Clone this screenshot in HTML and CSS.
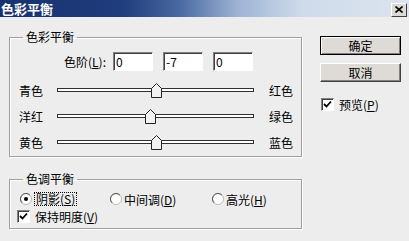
FILE: index.html
```html
<html>
<head>
    <title>色彩平衡</title>
    <link rel="stylesheet" href="styles.css">
</head>
<body>

<div id="dialog">

    <div id="titlebar">
        <span id="title">色彩平衡</span>
        <span id="close">
            <svg width="8" height="7" viewBox="0 0 8 7"><path d="M0.5 0.5L7.5 6.5M7.5 0.5L0.5 6.5" stroke="#000" stroke-width="1.6"/></svg>
        </span>
    </div>

    <div id="main">
        <div id="groups">

            <fieldset class="group" id="balance">
                <legend class="grouptitle">色彩平衡</legend>
                <div class="levels">
                    <span class="levelslabel">色阶(<u>L</u>):</span>
                    <span class="field">0</span>
                    <span class="field">-7</span>
                    <span class="field">0</span>
                </div>
                <div class="sliders">
                    <div class="sliderrow">
                        <span class="leftlabel">青色</span>
                        <div class="track">
                            <svg class="thumb" style="left: 50%" width="11" height="15" viewBox="0 0 11 15"><polygon points="0.5,5.5 5.5,0.5 10.5,5.5 10.5,14.5 0.5,14.5" fill="#f2f2f2" stroke="#222"/></svg>
                        </div>
                        <span class="rightlabel">红色</span>
                    </div>
                    <div class="sliderrow">
                        <span class="leftlabel">洋红</span>
                        <div class="track">
                            <svg class="thumb" style="left: 47%" width="11" height="15" viewBox="0 0 11 15"><polygon points="0.5,5.5 5.5,0.5 10.5,5.5 10.5,14.5 0.5,14.5" fill="#f2f2f2" stroke="#222"/></svg>
                        </div>
                        <span class="rightlabel">绿色</span>
                    </div>
                    <div class="sliderrow">
                        <span class="leftlabel">黄色</span>
                        <div class="track">
                            <svg class="thumb" style="left: 50%" width="11" height="15" viewBox="0 0 11 15"><polygon points="0.5,5.5 5.5,0.5 10.5,5.5 10.5,14.5 0.5,14.5" fill="#f2f2f2" stroke="#222"/></svg>
                        </div>
                        <span class="rightlabel">蓝色</span>
                    </div>
                </div>
            </fieldset>

            <fieldset class="group" id="tone">
                <legend class="grouptitle">色调平衡</legend>
                <div class="radios">
                    <span class="radio shadows">
                        <svg width="12" height="12" viewBox="0 0 12 12"><circle cx="6" cy="6" r="5.5" fill="#fff" stroke="#b8b8b8"/><path d="M2.1 9.9A5.5 5.5 0 0 1 9.9 2.1" fill="none" stroke="#555"/><circle cx="6" cy="6" r="2" fill="#000"/></svg>
                        <span class="focus">阴影(<u>S</u>)</span>
                    </span>
                    <span class="radio midtones">
                        <svg width="12" height="12" viewBox="0 0 12 12"><circle cx="6" cy="6" r="5.5" fill="#fff" stroke="#b8b8b8"/><path d="M2.1 9.9A5.5 5.5 0 0 1 9.9 2.1" fill="none" stroke="#555"/></svg>
                        <span>中间调(<u>D</u>)</span>
                    </span>
                    <span class="radio">
                        <svg width="12" height="12" viewBox="0 0 12 12"><circle cx="6" cy="6" r="5.5" fill="#fff" stroke="#b8b8b8"/><path d="M2.1 9.9A5.5 5.5 0 0 1 9.9 2.1" fill="none" stroke="#555"/></svg>
                        <span>高光(<u>H</u>)</span>
                    </span>
                </div>
                <div class="check keep">
                    <span class="box"><svg width="9" height="9" viewBox="0 0 9 9"><polyline points="1,4 3.5,6.5 8,1.5" fill="none" stroke="#000" stroke-width="1.8"/></svg></span>
                    <span>保持明度(<u>V</u>)</span>
                </div>
            </fieldset>

        </div>

        <div id="buttons">
            <span class="button default">确定</span>
            <span class="button">取消</span>
            <div class="check preview">
                <span class="box"><svg width="9" height="9" viewBox="0 0 9 9"><polyline points="1,4 3.5,6.5 8,1.5" fill="none" stroke="#000" stroke-width="1.8"/></svg></span>
                <span>预览(<u>P</u>)</span>
            </div>
        </div>
    </div>

</div>

</body>
</html>
```

FILE: styles.css
```css
body {
    margin: 0;
    background: #ededed;
    font-family: "Noto Sans CJK SC", "DejaVu Sans", sans-serif;
    font-size: 12px;
    color: #000000;
}

#dialog {
    width: 409px;
    height: 241px;
    overflow: hidden;
    background: #ededed;
}

#titlebar {
    height: 17px;
    display: flex;
    align-items: center;
    justify-content: space-between;
    background: linear-gradient(90deg, #17326f 0%, #1f3c7c 30%, #4a6aa2 44%, #9db3d3 58%, #cfdbea 74%, #dbe4ef 100%);
}

#title {
    color: #ffffff;
    font-weight: bold;
    font-size: 13px;
    line-height: 17px;
    padding-left: 1px;
}

#close {
    width: 14px;
    height: 12px;
    margin-right: 2px;
    margin-top: 2px;
    display: flex;
    align-items: center;
    justify-content: center;
    background: #dcdad5;
    border: 1px solid;
    border-color: #ffffff #404040 #404040 #ffffff;
}

#main {
    display: flex;
    padding-top: 13px;
}

#groups {
    margin-left: 9px;
    width: 293px;
}

.group {
    margin: 0;
    padding: 0;
    border: 1px solid #a0a0a0;
    box-shadow: 1px 1px 0 #ffffff, inset 1px 1px 0 #ffffff;
}

.grouptitle {
    margin-left: 13px;
    padding: 0 3px;
    line-height: 14px;
    height: 14px;
}

#balance {
    padding-bottom: 1px;
}

#tone {
    margin-top: 15px;
    padding-bottom: 5px;
}

.levels {
    display: flex;
    align-items: center;
    margin-top: 7px;
    height: 21px;
}

.levelslabel {
    width: 96px;
    text-align: right;
    margin-right: 7px;
}

.field {
    width: 36px;
    height: 17px;
    line-height: 17px;
    padding-left: 2px;
    margin-right: 10px;
    background: #ffffff;
    border: 1px solid;
    border-color: #808080 #ffffff #ffffff #808080;
    box-shadow: inset 1px 1px 0 #404040;
}

.sliders {
    margin-top: 5px;
}

.sliderrow {
    display: flex;
    align-items: center;
    height: 26px;
}

.leftlabel {
    width: 38px;
    padding-left: 9px;
}

.track {
    position: relative;
    width: 195px;
    height: 2px;
    background: #ffffff;
    border: 1px solid #303030;
}

.thumb {
    position: absolute;
    top: -6px;
    margin-left: -5px;
}

.rightlabel {
    margin-left: 15px;
}

.radios {
    display: flex;
    align-items: center;
    height: 14px;
    margin-top: 6px;
    padding-left: 10px;
}

.radio {
    display: flex;
    align-items: center;
    gap: 2px;
}

.radio.shadows {
    width: 90px;
}

.radio.midtones {
    width: 102px;
}

.focus {
    border: 1px dotted #000000;
    padding: 0 1px;
    line-height: 12px;
}

.check {
    display: flex;
    align-items: center;
    height: 14px;
    gap: 5px;
}

.check.keep {
    margin-top: 3px;
    padding-left: 7px;
}

.box {
    width: 11px;
    height: 11px;
    display: flex;
    align-items: center;
    justify-content: center;
    background: #ffffff;
    border: 1px solid;
    border-color: #808080 #ffffff #ffffff #808080;
    box-shadow: inset 1px 1px 0 #404040;
}

#buttons {
    margin-left: 18px;
    margin-top: 6px;
    width: 81px;
    display: flex;
    flex-direction: column;
}

.button {
    height: 17px;
    line-height: 17px;
    text-align: center;
    background: #dedbd6;
    border: 1px solid;
    border-color: #ffffff #404040 #404040 #ffffff;
    box-shadow: inset -1px -1px 0 #808080;
}

.button.default {
    border-color: #000000;
    box-shadow: inset 1px 1px 0 #ffffff, inset -1px -1px 0 #808080;
}

.button + .button {
    margin-top: 8px;
}

.check.preview {
    margin-top: 15px;
    padding-left: 1px;
}
```
